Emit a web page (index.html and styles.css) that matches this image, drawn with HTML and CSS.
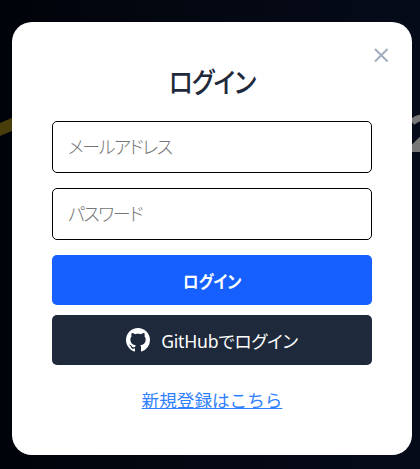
FILE: index.html
```html
<!DOCTYPE html>
<html lang="ja">
<head>
<meta charset="utf-8">
<title>ログイン</title>
<link rel="stylesheet" href="styles.css">
</head>
<body>
<div class="backdrop">
  <svg class="swoosh" width="14" height="40" viewBox="0 0 14 40" aria-hidden="true"><path d="M0 18 L14 12 L14 25 L0 31 Z" fill="#4a3d0c"/></svg>
  <span class="bg-digit">2</span>
  <div class="modal">
    <button class="close" type="button" aria-label="閉じる">
      <svg width="14" height="14" viewBox="0 0 14 14"><path d="M1 1 L13.5 13.5 M13.5 1 L1 13.5" stroke="#a0aec0" stroke-width="2" fill="none"/></svg>
    </button>
    <h1 class="title"><span class="narrow">ログイン</span></h1>
    <form class="form">
      <input class="field" type="text" placeholder="メールアドレス">
      <input class="field" type="password" placeholder="パスワード">
      <button class="btn btn-primary" type="button"><span class="narrow">ログイン</span></button>
      <button class="btn btn-dark" type="button">
        <svg class="gh" width="24" height="24" viewBox="0 0 16 16" aria-hidden="true"><path fill="#fff" d="M8 0C3.58 0 0 3.58 0 8c0 3.54 2.29 6.53 5.47 7.59.4.07.55-.17.55-.38 0-.19-.01-.82-.01-1.49-2.01.37-2.53-.49-2.69-.94-.09-.23-.48-.94-.82-1.13-.28-.15-.68-.52-.01-.53.63-.01 1.08.58 1.23.82.72 1.21 1.87.87 2.33.66.07-.52.28-.87.51-1.07-1.78-.2-3.64-.89-3.64-3.95 0-.87.31-1.59.82-2.15-.08-.2-.36-1.02.08-2.12 0 0 .67-.21 2.2.82.64-.18 1.32-.27 2-.27s1.36.09 2 .27c1.53-1.04 2.2-.82 2.2-.82.44 1.1.16 1.92.08 2.12.51.56.82 1.27.82 2.15 0 3.07-1.87 3.75-3.65 3.95.29.25.54.73.54 1.48 0 1.07-.01 1.93-.01 2.2 0 .21.15.46.55.38A8.01 8.01 0 0 0 16 8c0-4.42-3.58-8-8-8z"/></svg>
        <span class="gh-label">GitHubでログイン</span>
      </button>
    </form>
    <p class="foot"><a class="link" href="#">新規登録はこちら</a></p>
  </div>
</div>
</body>
</html>
```
FILE: styles.css
```css
* { box-sizing: border-box; }
html, body { margin: 0; height: 100%; }
body { font-family: "Noto Sans", "Noto Sans CJK JP", sans-serif; }
.backdrop {
  position: relative;
  height: 469px;
  overflow: hidden;
  background: linear-gradient(90deg, #01030a 0%, #040812 50%, #060b1a 100%);
  padding: 22px 8px 14px 12px;
}
.swoosh { position: absolute; left: 0; top: 105px; }
.bg-digit {
  position: absolute;
  left: 408px;
  top: 102px;
  font: 700 52px/60px "Noto Sans", sans-serif;
  color: #777;
}
.modal {
  position: relative;
  width: 400px;
  height: 433px;
  background: #fff;
  border-radius: 20px;
  padding: 40px 40px 0;
}
.close {
  position: absolute;
  top: 26px;
  right: 24px;
  width: 14px;
  height: 14px;
  padding: 0;
  border: 0;
  background: none;
  display: flex;
}
.narrow { display: inline-block; transform: scaleX(0.88); }
.title {
  margin: 0 0 21px;
  height: 38px;
  text-align: center;
  font-size: 28px;
  line-height: 40px;
  font-weight: 500;
  color: #1e293b;
  font-feature-settings: "palt";
  letter-spacing: -1px;
}
.form { display: flex; flex-direction: column; }
.field {
  width: 320px;
  height: 52px;
  margin-bottom: 15px;
  padding: 0 15px 3px;
  border: 1px solid #000;
  border-radius: 5px;
  background: #fff;
  font: 300 18px "Noto Sans CJK JP", sans-serif;
  font-feature-settings: "palt";
  letter-spacing: -1.4px;
  outline: none;
}
.field::placeholder { color: #757575; opacity: 1; }
.btn {
  width: 320px;
  height: 50px;
  border: 0;
  border-radius: 5px;
  display: flex;
  align-items: center;
  justify-content: center;
  color: #fff;
  font-family: "Noto Sans", "Noto Sans CJK JP", sans-serif;
  font-size: 17.6px;
  font-feature-settings: "palt";
}
.btn-primary { background: #1560ff; font-weight: 700; margin-bottom: 10px; }
.btn-dark { background: #1e293b; gap: 11px; font-weight: 400; }
.gh { flex: none; }
.gh-label { letter-spacing: -0.2px; }
.foot { margin: 22px 0 0; text-align: center; font-size: 17.6px; line-height: 26px; font-weight: 400; }
.link { color: #2f80ff; text-decoration: underline; }
```
